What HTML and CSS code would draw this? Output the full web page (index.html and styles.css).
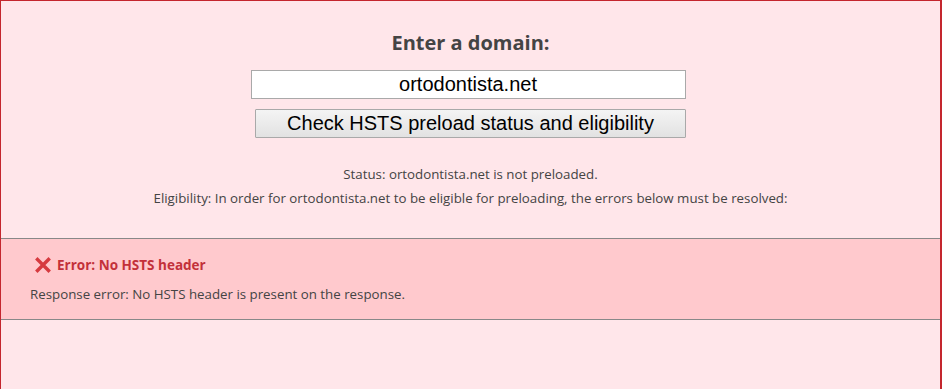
FILE: index.html
```html
<!DOCTYPE html>
<html lang="en">
<head>
    <meta charset="UTF-8">
    <meta name="viewport" content="width=device-width, initial-scale=1.0">
    <title>HSTS Preload List Submission</title>
    <link rel="stylesheet" href="styles.css">
</head>
<body>
    <div class="page">
        <form id="domainForm" class="lookup">
            <h2>Enter a domain:</h2>
            <input type="text" id="domain" class="domain" name="domain" value="ortodontista.net">
            <button type="submit" class="check">Check HSTS preload status and eligibility</button>
        </form>

        <div class="summary">
            <p>Status: ortodontista.net is not preloaded.</p>
            <p>Eligibility: In order for ortodontista.net to be eligible for preloading, the errors below must be resolved:</p>
        </div>

        <div class="issue error">
            <h3>
                <svg class="icon" width="16" height="16" viewBox="0 0 16 16">
                    <path d="M2.5 2.5 L13.5 13.5 M13.5 2.5 L2.5 13.5" stroke="#d63a3f" stroke-width="3.4" stroke-linecap="square"/>
                </svg>
                Error: No HSTS header
            </h3>
            <p>Response error: No HSTS header is present on the response.</p>
        </div>
    </div>
</body>
</html>
```

FILE: styles.css
```css
html,
body {
    margin: 0;
    height: 100%;
}
body {
    background-color: #ffe6ea;
    font-family: "Open Sans", "Noto Sans", sans-serif;
    color: #444;
}
.page {
    box-sizing: border-box;
    min-height: 100%;
    border: 1px solid #c4262e;
    border-right-width: 2px;
    border-bottom: none;
}
.lookup {
    display: flex;
    flex-direction: column;
    align-items: center;
    padding-top: 29px;
}
.lookup h2 {
    margin: 0 0 14px;
    font-size: 20px;
    line-height: 26px;
    font-weight: bold;
    color: #444;
}
.domain {
    box-sizing: border-box;
    width: 435px;
    height: 29px;
    margin: 0 5px 10px 0;
    padding: 0 4px;
    border: 1px solid #a9a9a9;
    background: #fff;
    font-family: "Liberation Sans", Arial, sans-serif;
    font-size: 20px;
    text-align: center;
    color: #000;
}
.check {
    box-sizing: border-box;
    width: 431px;
    height: 29px;
    margin: 0;
    padding: 0;
    border: 1px solid #a9a9a9;
    border-radius: 1px;
    background: linear-gradient(#f4f4f4, #e2e2e2);
    font-family: "Liberation Sans", Arial, sans-serif;
    font-size: 20px;
    color: #000;
    cursor: pointer;
}
.summary {
    padding-top: 24px;
    text-align: center;
    font-size: 13.3px;
}
.summary p {
    margin: 0;
    line-height: 24px;
}
.issue {
    margin-top: 28px;
    padding: 17px 0 16px 29px;
    border-top: 1px solid #888;
    border-bottom: 1px solid #888;
}
.issue.error {
    background-color: #ffc9cd;
}
.issue h3 {
    display: flex;
    align-items: center;
    gap: 6px;
    margin: 0 0 11px 5px;
    font-size: 13.5px;
    line-height: 18px;
    font-weight: bold;
    color: #c3303a;
}
.issue p {
    margin: 0;
    font-size: 13.3px;
    line-height: 18px;
}
```
